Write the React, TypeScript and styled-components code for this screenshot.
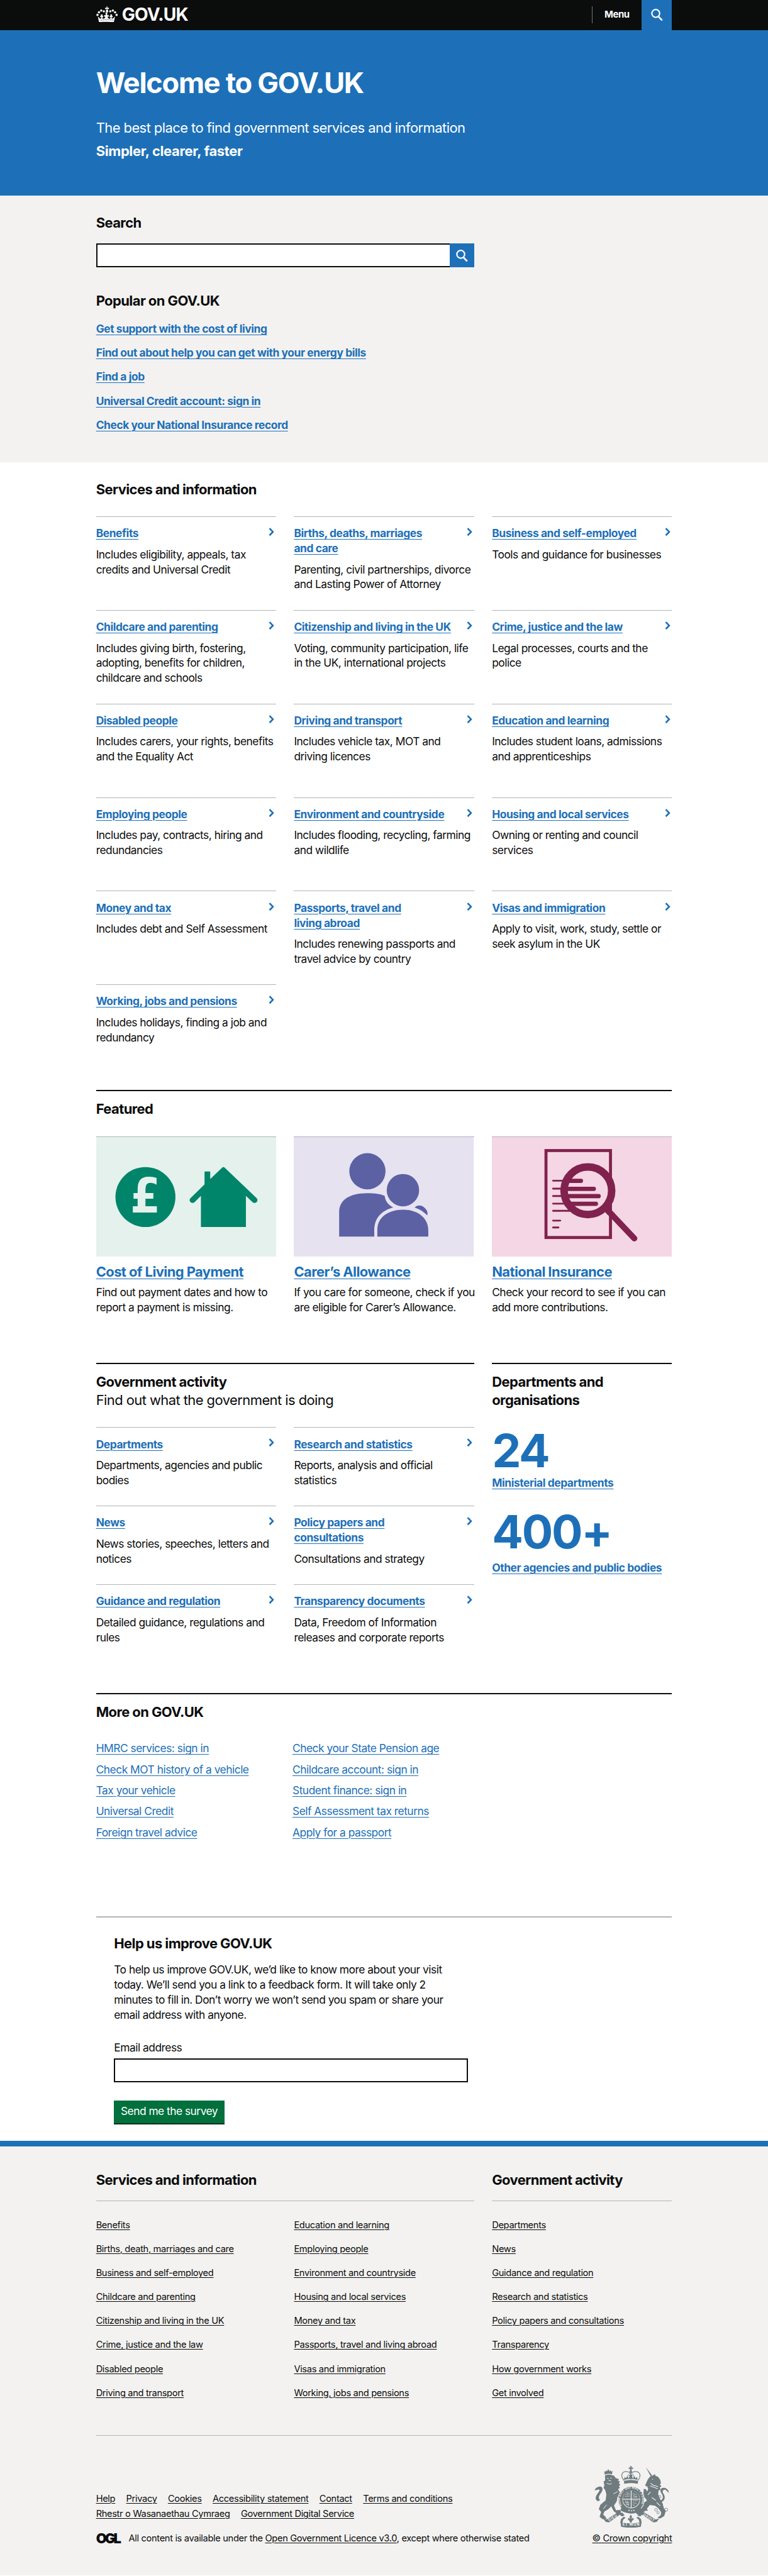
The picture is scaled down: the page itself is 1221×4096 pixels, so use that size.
import React from 'react';
import styled, { createGlobalStyle } from 'styled-components';

const blue = '#1d70b8';
const ink = '#0b0c0c';
const paleGrey = '#f3f2f1';
const midGrey = '#b1b4b6';

/* 1rem is ten design pixels, so every measure below scales with the root size. */
const GlobalStyle = createGlobalStyle`
  html { font-size: 9.539px; }
  *, *::before, *::after { box-sizing: border-box; }
  body {
    margin: 0;
    background: #fff;
    color: ${ink};
    font-family: Inter, Roboto, 'Liberation Sans', sans-serif;
    font-size: 1.824rem;
    line-height: 2.5rem;
    letter-spacing: -0.0285em;
  }
  h1, h2, h3, p, ul { margin: 0; padding: 0; font-weight: 400; }
  h3 { font-size: inherit; }
  ul { list-style: none; }
  svg { display: block; }
`;

/* ---------- shared parts ---------- */

const Container = styled.div`
  width: 96rem;
  margin: 0 auto;
`;

const Heading = styled.h2`
  font-size: 2.304rem;
  line-height: 3rem;
  font-weight: 700;
  letter-spacing: -0.0265em;
`;

const Lead = styled.p`
  font-size: 2.304rem;
  line-height: 3rem;
  letter-spacing: -0.026em;
`;

const Link = styled.a<{ $bold?: boolean; $dark?: boolean; $large?: boolean }>`
  color: ${p => (p.$dark ? ink : blue)};
  font-weight: ${p => (p.$bold ? 700 : 400)};
  font-size: ${p => (p.$large ? '2.304rem' : 'inherit')};
  letter-spacing: ${p => (p.$bold ? (p.$large ? '-0.027em' : '-0.024em') : 'inherit')};
  text-decoration: underline;
  text-decoration-thickness: 1px;
  text-underline-offset: ${p => (p.$dark ? '0.26rem' : '0.31rem')};
`;

const ThreeColumns = styled.div`
  display: grid;
  grid-template-columns: repeat(3, 30rem);
  column-gap: 3rem;
`;

const SearchGlyph = () => (
  <SearchSvg viewBox="0 0 20 20" fill="none" stroke="#fff">
    <circle cx="7.9" cy="7.7" r="6.5" strokeWidth="2.3" />
    <path d="M12.3 12.8 18.6 19.4" strokeWidth="2.8" />
  </SearchSvg>
);
const SearchSvg = styled.svg`
  width: 2rem;
  height: 2rem;
`;

/* ---------- header ---------- */

const Header = styled.header`
  background: ${ink};
`;
const HeaderRow = styled(Container)`
  display: flex;
  height: 5rem;
`;
const Logo = styled.div`
  display: flex;
  align-items: flex-start;
  gap: 0.7rem;
  padding-top: 1rem;
  color: #fff;
`;
const CrownSvg = styled.svg`
  width: 3.6rem;
  height: 2.7rem;
`;
const LogoText = styled.span`
  font-size: 2.95rem;
  line-height: 3rem;
  font-weight: 700;
  letter-spacing: -0.028em;
  margin-top: -0.05rem;
`;
const Menu = styled.div`
  display: flex;
  align-items: center;
  margin: 1rem 0 1.1rem auto;
  padding: 0 2rem;
  border-left: 1px solid #6f777b;
  color: #fff;
  font-size: 1.57rem;
  font-weight: 700;
  letter-spacing: -0.03em;
`;
const HeaderSearch = styled.button`
  width: 5.1rem;
  padding: 0;
  border: 0;
  background: ${blue};
  display: flex;
  align-items: center;
  justify-content: center;
`;

const Crown = () => (
  <CrownSvg viewBox="0 0 36 27" fill="#fff">
    <path d="M17 .6h2l-.4 2.3 2.6-.6v2.6l-2.6-.6.3 2a2 2 0 1 1-1.8 0l.3-2-2.6.6V2.300l2.600.6z" />
    <circle cx="2.1" cy="14.300" r="1.900" />
    <circle cx="4.600" cy="9.900" r="1.900" />
    <circle cx="8.300" cy="7.100" r="1.900" />
    <circle cx="12.600" cy="8.300" r="1.800" />
    <circle cx="33.900" cy="14.300" r="1.900" />
    <circle cx="31.400" cy="9.900" r="1.900" />
    <circle cx="27.700" cy="7.100" r="1.900" />
    <circle cx="23.400" cy="8.300" r="1.800" />
    <path d="M4.700 26.800 2.700 17.200c2 1 3 3.800 4.700 3.300 1.400-.4 1.200-2 .7-2.600l-1.500.6v-2.800l1.500.6-.6-2.600h3.200l-.6 2.600 1.500-.6v2.800l-1.500-.6c-.3 1.600.6 3 2.400 2.700 1.900-.3 2.600-1.800 2.500-3.500l-1.600.8-.3-3.600 2 1 .9-2.200-1-2.500h4l-1 2.500.9 2.200 2-1-.3 3.600-1.600-.8c-.1 1.700.6 3.200 2.500 3.500 1.800.3 2.700-1.100 2.400-2.700l-1.500.6v-2.800l1.500.6-.6-2.600h3.200l-.6 2.600 1.500-.6v2.800l-1.500-.6c-.5.6-.7 2.200.7 2.600 1.700.5 2.700-2.300 4.700-3.300l-2 9.600c-8.400-1.200-18.200-1.200-26.600 0z" />
    <path d="M7.500 23.300c7-1 14-1 21 0" fill="none" stroke={ink} strokeWidth=".8" strokeDasharray="2 1.200" />
  </CrownSvg>
);

/* ---------- hero ---------- */

const Hero = styled.section`
  height: 27.6rem;
  padding-top: 6.3rem;
  background: ${blue};
  color: #fff;
`;
const Title = styled.h1`
  font-size: 4.72rem;
  line-height: 5rem;
  font-weight: 700;
  letter-spacing: -0.028em;
  margin-bottom: 3.5rem;
`;
const Strapline = styled(Heading).attrs({ as: 'p' })`
  margin-top: 0.9rem;
  letter-spacing: -0.017em;
`;

/* ---------- search and popular ---------- */

const SearchSection = styled.section`
  padding: 3rem 0 5rem;
  background: ${paleGrey};
`;
const SearchBox = styled.div`
  display: flex;
  width: 63rem;
  height: 4rem;
  margin: 2rem 0 4rem;
`;
const SearchInput = styled.input`
  flex: 1;
  border: 2px solid ${ink};
  border-right: 0;
  border-radius: 0;
  background: #fff;
`;
const SearchButton = styled.button`
  width: 4rem;
  padding: 0;
  border: 0;
  background: ${blue};
  display: flex;
  align-items: center;
  justify-content: center;
`;
const PopularList = styled.ul`
  display: grid;
  row-gap: 1.5rem;
  margin-top: 2rem;
`;

/* ---------- topic grids ---------- */

const TopicGrid = styled.div<{ $columns: number }>`
  display: grid;
  grid-template-columns: repeat(${p => p.$columns}, 30rem);
  grid-auto-rows: 1fr;
  column-gap: 3rem;
  margin-top: 3rem;
`;
const TopicCell = styled.div`
  border-top: 1px solid ${midGrey};
  padding: 1.5rem 0 3rem;
`;
const TopicHead = styled.div`
  display: flex;
  justify-content: space-between;
  margin-bottom: 1rem;
  white-space: nowrap;
`;
const Chevron = styled.svg`
  flex: none;
  width: 1rem;
  height: 1.4rem;
  margin: 0.3rem 0.2rem 0 0;
`;
const Text = styled.p`
  white-space: nowrap;
`;

type TopicData = { title: string[]; text: string[] };

const Lines = ({ of }: { of: string[] }) => (
  <>
    {of.map((line, i) => (
      <React.Fragment key={line}>
        {i > 0 && <br />}
        {line}
      </React.Fragment>
    ))}
  </>
);

const Topic = ({ title, text }: TopicData) => (
  <TopicCell>
    <TopicHead>
      <h3>
        <Link $bold><Lines of={title} /></Link>
      </h3>
      <Chevron viewBox="0 0 10 14" fill="none" stroke={blue} strokeWidth="2.8">
        <path d="M1.6 1.2 7.2 7l-5.600 5.800" />
      </Chevron>
    </TopicHead>
    <Text><Lines of={text} /></Text>
  </TopicCell>
);

const services: TopicData[] = [
  { title: ['Benefits'], text: ['Includes eligibility, appeals, tax', 'credits and Universal Credit'] },
  { title: ['Births, deaths, marriages', 'and care'], text: ['Parenting, civil partnerships, divorce', 'and Lasting Power of Attorney'] },
  { title: ['Business and self-employed'], text: ['Tools and guidance for businesses'] },
  { title: ['Childcare and parenting'], text: ['Includes giving birth, fostering,', 'adopting, benefits for children,', 'childcare and schools'] },
  { title: ['Citizenship and living in the UK'], text: ['Voting, community participation, life', 'in the UK, international projects'] },
  { title: ['Crime, justice and the law'], text: ['Legal processes, courts and the', 'police'] },
  { title: ['Disabled people'], text: ['Includes carers, your rights, benefits', 'and the Equality Act'] },
  { title: ['Driving and transport'], text: ['Includes vehicle tax, MOT and', 'driving licences'] },
  { title: ['Education and learning'], text: ['Includes student loans, admissions', 'and apprenticeships'] },
  { title: ['Employing people'], text: ['Includes pay, contracts, hiring and', 'redundancies'] },
  { title: ['Environment and countryside'], text: ['Includes flooding, recycling, farming', 'and wildlife'] },
  { title: ['Housing and local services'], text: ['Owning or renting and council', 'services'] },
  { title: ['Money and tax'], text: ['Includes debt and Self Assessment'] },
  { title: ['Passports, travel and', 'living abroad'], text: ['Includes renewing passports and', 'travel advice by country'] },
  { title: ['Visas and immigration'], text: ['Apply to visit, work, study, settle or', 'seek asylum in the UK'] },
  { title: ['Working, jobs and pensions'], text: ['Includes holidays, finding a job and', 'redundancy'] },
];

const activity: TopicData[] = [
  { title: ['Departments'], text: ['Departments, agencies and public', 'bodies'] },
  { title: ['Research and statistics'], text: ['Reports, analysis and official', 'statistics'] },
  { title: ['News'], text: ['News stories, speeches, letters and', 'notices'] },
  { title: ['Policy papers and', 'consultations'], text: ['Consultations and strategy'] },
  { title: ['Guidance and regulation'], text: ['Detailed guidance, regulations and', 'rules'] },
  { title: ['Transparency documents'], text: ['Data, Freedom of Information', 'releases and corporate reports'] },
];

const ServicesSection = styled(Container)`
  padding-top: 3rem;
`;

/* ---------- ruled sections ---------- */

const RuledSection = styled.section<{ $gap: string }>`
  margin-top: ${p => p.$gap};
  border-top: 2px solid ${ink};
  padding-top: 1.5rem;
`;

/* ---------- featured ---------- */

const FeatureRow = styled(ThreeColumns)`
  margin-top: 3rem;
`;
const Picture = styled.svg`
  width: 30rem;
  height: 20.1rem;
  border-top: 1px solid ${midGrey};
  margin-bottom: 1rem;
`;
const FeatureTitle = styled(Heading).attrs({ as: 'h3' })`
  margin-bottom: 0.7rem;
`;

const MoneyAndHome = () => (
  <Picture viewBox="0 0 300 200">
    <rect width="300" height="200" fill="#e5f1ed" />
    <circle cx="82" cy="100" r="50" fill="#00856a" />
    <text x="81.500" y="126" textAnchor="middle" fontFamily="'DejaVu Sans', sans-serif" fontWeight="700" fontSize="80" textLength="50" lengthAdjust="spacingAndGlyphs" fill="#e5f1ed">£</text>
    <path fill="#00856a" d="M209.500 51.500c1.500-1.800 3.500-1.800 5 0l53 50.500c4 4.500-2 10.500-7 6.500L249.500 98v52h-75V98L164 108.500c-5 4-11-2-7-6.500l23.500-23V57.500h9.500V70z" />
  </Picture>
);

const TwoPeople = () => (
  <Picture viewBox="0 0 300 200">
    <rect width="300" height="200" fill="#e6e2f0" />
    <g fill="#5c61a4">
      <circle cx="122.800" cy="57" r="30.200" />
      <circle cx="182" cy="88.500" r="27" />
      <path d="M75.700 166v-41c0-20 17-31.300 47-31.300 12 0 22 1.300 29 4.600.5 8 6 15 14 19-20 6-31.500 18-31.500 38.700v10z" />
      <path d="M139.300 166v-12c0-20 18-33 43-33s42 14 42 35v10z" />
      <path d="M201.500 117.500c5-4.500 11-4.500 16 0 5 4 6.500 9 5 13-5.500-5.500-12-10-21-13z" />
    </g>
  </Picture>
);

const DocumentLens = () => (
  <Picture viewBox="0 0 300 200">
    <rect width="300" height="200" fill="#f5d6e4" />
    <g stroke="#80224d" fill="none">
      <rect x="90.200" y="22.500" width="107.500" height="145" strokeWidth="5" />
      <path strokeWidth="3" strokeLinecap="round" d="M102 72.700h24M102 86h18M102 98.300h18M102 111h20M102 123h28M102 139.300h12M102 150.700h9" />
      <circle cx="160" cy="89.500" r="39.700" strokeWidth="12.500" fill="#f5d6e4" />
      <path strokeWidth="7" strokeLinecap="round" d="M124 73h24.500M119 86.300h51M120 98.500h58M124 111.200h49.500" />
      <path strokeWidth="10" strokeLinecap="round" d="M192 121 237.500 169" />
      <path strokeWidth="8" d="M186 116 196 127" />
    </g>
  </Picture>
);

/* ---------- government activity ---------- */

const ActivityRow = styled.div`
  display: grid;
  grid-template-columns: 63rem 30rem;
  column-gap: 3rem;
`;
const BigNumber = styled.p<{ $top: string; $bottom?: string }>`
  margin: ${p => p.$top} 0 ${p => p.$bottom || '0'};
  color: ${blue};
  font-size: 7.7rem;
  line-height: 8rem;
  font-weight: 700;
  letter-spacing: -0.03em;
`;

/* ---------- more ---------- */

const MoreLists = styled.div`
  display: grid;
  grid-template-columns: 32.75rem auto;
  margin-top: 3.3rem;
`;
const MoreList = styled.ul`
  display: grid;
  row-gap: 1rem;
  justify-items: start;
`;

/* ---------- survey ---------- */

const Survey = styled.section`
  margin-top: 12.7rem;
  border-top: 2px solid ${midGrey};
  padding: 2.9rem 3rem 2.8rem;
`;
const SurveyText = styled(Text)`
  margin: 1.6rem 0 3rem;
`;
const EmailLabel = styled.label`
  display: block;
`;
const EmailInput = styled.input`
  display: block;
  width: 59rem;
  height: 4rem;
  margin: 0.5rem 0 3rem;
  border: 2px solid ${ink};
  border-radius: 0;
  background: #fff;
`;
const SurveyButton = styled.button`
  display: block;
  height: 4rem;
  width: 18.4rem;
  padding: 0;
  border: 0;
  border-bottom: 2px solid #002d18;
  background: #00703c;
  color: #fff;
  font: inherit;
  line-height: 3.6rem;
  letter-spacing: -0.03em;
`;

/* ---------- footer ---------- */

const Footer = styled.footer`
  border-top: 1rem solid ${blue};
  padding: 4rem 0 5.2rem;
  background: ${paleGrey};
  font-size: 1.536rem;
  line-height: 2rem;
  letter-spacing: -0.023em;
`;
const FooterNav = styled.div`
  display: grid;
  grid-template-columns: 63rem 30rem;
  column-gap: 3rem;
`;
const FooterHeading = styled(Heading)`
  padding-bottom: 2rem;
  border-bottom: 1px solid ${midGrey};
  margin-bottom: 3rem;
`;
const FooterList = styled.ul<{ $columns: number }>`
  display: grid;
  grid-template-columns: repeat(${p => p.$columns}, 30rem);
  grid-template-rows: repeat(8, 2rem);
  grid-auto-flow: column;
  gap: 2rem 3rem;
`;
const Meta = styled.div`
  display: flex;
  justify-content: space-between;
  align-items: flex-end;
  margin-top: 6rem;
  padding-top: 5rem;
  border-top: 1px solid ${midGrey};
`;
const MetaLinks = styled.ul`
  display: flex;
  flex-wrap: wrap;
  width: 62rem;
  column-gap: 1.82rem;
  line-height: 2.5rem;
  margin-bottom: 1.75rem;
`;
const Licence = styled.div`
  display: flex;
  align-items: center;
`;
const Ogl = styled.span`
  width: 5.45rem;
  font-size: 2.3rem;
  line-height: 2rem;
  font-weight: 900;
  letter-spacing: -0.13em;
`;
const Copyright = styled.div`
  display: flex;
  flex-direction: column;
  align-items: flex-end;
`;
const ArmsSvg = styled.svg`
  width: 12.5rem;
  height: 10.3rem;
  margin: 0 0.4rem 0.8rem 0;
`;

const grey = '#6f7b7f';
const Arms = () => (
  <ArmsSvg viewBox="33 32 375 309">
    <defs>
      <path id="garter" d="M173 233A55 55 0 1 1 261 233" />
    </defs>
    {/* crown */}
    <g fill={grey}>
      <path d="M211 33h9l-2 8 8-2v9l-8-2 2 9h-9l2-9-8 2v-9l8 2z" />
      <circle cx="215" cy="60" r="6" />
      <path d="M180 107q35-10 72 0l-3 15q-33-8-66 0z" />
      <path d="M181 102l3-16 7 8 6-12 7 14 5-12-4-4 10-8 10 8-4 4 5 12 7-14 6 12 7-8 3 16q-34-9-68 0z" />
    </g>
    <g fill="none" stroke={grey} strokeWidth="4.500" strokeDasharray="5 1">
      <path d="M181 104c-30-36 8-58 34-34 26-24 64-2 36 34" />
      <path d="M215 66c-14 6-17 18-15 30M215 66c14 6 17 18 15 30M215 66v34" strokeWidth="3" />
    </g>
    {/* lion */}
    <g fill={grey}>
      <path d="M85 76l-3-18 7 4 2-8 6 5 5-12 6 12 7-6 1 8 8-5-3 18q-17-6-36 2z" />
      <path d="M86 80q18-8 36-2c10 2 14 6 16 14l18 6-5 7 10 6-6 7 8 8-7 6 4 10-9 6 14 22 12 14-8 8 8 22-13-8-15-22-4 24-14 22 10 24 18-2 8 8-6 8h-18l-12-8-14-26-14 14-20 12-6 16 10 8 8 14h-22l-14-12 8-24-12-14 8-22 26-22 4-30-6-22-8-10 4-14-4-18 8-6z" />
      <path d="M52 209c-24-8-8-34 2-46 8-10 4-16-4-12l-16 4 6-12 14-7c18-6 26 10 14 28-10 14-20 28-6 38z" />
    </g>
    <g fill="none" stroke={paleGrey} strokeWidth="3">
      <path d="M96 92l8 5M112 94l8-2M104 104l12 3M78 246l16-20M128 172l22-12M154 196l10 12M94 118q14 10 26 2" />
    </g>
    {/* unicorn */}
    <g fill={grey}>
      <path d="M290 38l32 42-7 5z" />
      <path d="M300 100l10-14 16-7 10-6 2 8 14 6 10 14 4 18-6 4 8 12-8 4 4 12-10 4-2 18 8 22 14 24 6 24 10 14-8 26-20 12-14-4 16-12 4-14-16-22-16-12-26-4-14 18 4 12-10-2-20 14-22 6-8-8 14-6 24-30-2-12 20-14-10-14-24 4-14-20-8-2 2-12 16-6 10 6-10 8 8 14 20-4 8-16 8-14-4-16-12-2z" />
      <path d="M366 214c20-8 24-28 12-44-10-14 4-26 16-14l12 12-4-14-8-8c-20-12-38 2-28 20 10 16 16 28-2 40z" />
      <path d="M280 146l12 4 8 20-6 16-12-2-4-12z" />
    </g>
    <g fill="none" stroke={paleGrey} strokeWidth="3.500">
      <path d="M314 118l12 10 26 8M312 132l38 14M322 98l4 2M320 190l20 14M344 214l18 18M300 176l14-14" />
    </g>
    <g fill="none" stroke={grey} strokeWidth="2.500">
      <circle cx="341" cy="251" r="7" />
      <circle cx="351" cy="266" r="6" />
      <circle cx="374" cy="262" r="7" />
      <circle cx="392" cy="251" r="8" />
      <circle cx="360" cy="186" r="6" />
      <circle cx="299" cy="132" r="5" />
    </g>
    {/* garter and shield */}
    <circle cx="217" cy="200" r="67" fill={paleGrey} />
    <circle cx="217" cy="200" r="54" fill="none" stroke={grey} strokeWidth="20" />
    <text fontSize="15" fontWeight="700" fill={paleGrey} letterSpacing="0">
      <textPath href="#garter" startOffset="4" textLength="226">HONI SOIT QUI MAL Y PENSE</textPath>
    </text>
    <circle cx="217" cy="198" r="42" fill={grey} />
    <path d="M217 156v84M175 198h84" stroke={paleGrey} strokeWidth="4" />
    <g fill="none" stroke={paleGrey} strokeWidth="2.500">
      <path d="M188 176h22M186 184h24M194 168h16M224 170l20 6M226 180l22 6M226 188h20M226 206h22M226 216l18 4M226 226l10 4M188 206l14 24M196 204l10 26M186 214h20M190 224h16" strokeDasharray="6 2" />
    </g>
    <path d="M170 238q44 34 92-2l8 18q-52 32-108 0z" fill={grey} />
    <path d="M203 254h6M215 256h6M227 254h6" stroke={paleGrey} strokeWidth="5" />
    {/* scrolls */}
    <g fill={grey}>
      <path d="M76 294l18 6 56-36 24 2 10 14-14 4-10-8-54 38-16-2z" />
      <path d="M358 294l-18 6-58-36-24 2-10 14 14 4 10-8 56 38 16-2z" />
      <path d="M163 312q52 14 106 0l-4 24q-48 10-98 0z" />
      <path d="M180 286l-14 12-3 16 10 3 4-16 12-10zM252 286l14 12 3 16-10 3-4-16-12-10z" />
      <path d="M215 275l6 11-3 12 8-7 4 8-9 8-3 10h-6l-3-10-9-8 4-8 8 7-3-12z" />
    </g>
    <g fill={paleGrey} fontSize="17" fontWeight="700" letterSpacing="0">
      <text transform="translate(106 309) rotate(-31)" textLength="48">DIEU</text>
      <text transform="translate(276 279) rotate(31)" textLength="62">DROIT</text>
      <text x="174" y="332" fontSize="18" textLength="84">ET MON</text>
    </g>
  </ArmsSvg>
);

const popular = [
  'Get support with the cost of living',
  'Find out about help you can get with your energy bills',
  'Find a job',
  'Universal Credit account: sign in',
  'Check your National Insurance record',
];
const moreLeft = ['HMRC services: sign in', 'Check MOT history of a vehicle', 'Tax your vehicle', 'Universal Credit', 'Foreign travel advice'];
const moreRight = ['Check your State Pension age', 'Childcare account: sign in', 'Student finance: sign in', 'Self Assessment tax returns', 'Apply for a passport'];
const footerServices = [
  'Benefits', 'Births, death, marriages and care', 'Business and self-employed', 'Childcare and parenting',
  'Citizenship and living in the UK', 'Crime, justice and the law', 'Disabled people', 'Driving and transport',
  'Education and learning', 'Employing people', 'Environment and countryside', 'Housing and local services',
  'Money and tax', 'Passports, travel and living abroad', 'Visas and immigration', 'Working, jobs and pensions',
];
const footerActivity = [
  'Departments', 'News', 'Guidance and regulation', 'Research and statistics',
  'Policy papers and consultations', 'Transparency', 'How government works', 'Get involved',
];
const metaLinks = [
  'Help', 'Privacy', 'Cookies', 'Accessibility statement', 'Contact', 'Terms and conditions',
  'Rhestr o Wasanaethau Cymraeg', 'Government Digital Service',
];

const Links = ({ items, bold, dark }: { items: string[]; bold?: boolean; dark?: boolean }) => (
  <>
    {items.map(item => (
      <li key={item}>
        <Link $bold={bold} $dark={dark}>{item}</Link>
      </li>
    ))}
  </>
);

export default function App() {
  return (
    <>
      <GlobalStyle />
      <Header>
        <HeaderRow>
          <Logo>
            <Crown />
            <LogoText>GOV.UK</LogoText>
          </Logo>
          <Menu>Menu</Menu>
          <HeaderSearch aria-label="Search GOV.UK"><SearchGlyph /></HeaderSearch>
        </HeaderRow>
      </Header>

      <Hero>
        <Container>
          <Title>Welcome to GOV.UK</Title>
          <Lead>The best place to find government services and information</Lead>
          <Strapline>Simpler, clearer, faster</Strapline>
        </Container>
      </Hero>

      <SearchSection>
        <Container>
          <Heading>Search</Heading>
          <SearchBox>
            <SearchInput aria-label="Search" />
            <SearchButton aria-label="Search"><SearchGlyph /></SearchButton>
          </SearchBox>
          <Heading>Popular on GOV.UK</Heading>
          <PopularList><Links items={popular} bold /></PopularList>
        </Container>
      </SearchSection>

      <ServicesSection>
        <Heading>Services and information</Heading>
        <TopicGrid $columns={3}>
          {services.map(topic => <Topic key={topic.title[0]} {...topic} />)}
        </TopicGrid>
      </ServicesSection>

      <Container>
        <RuledSection $gap="2rem">
          <Heading>Featured</Heading>
          <FeatureRow>
            <div>
              <MoneyAndHome />
              <FeatureTitle><Link $bold $large>Cost of Living Payment</Link></FeatureTitle>
              <Text><Lines of={['Find out payment dates and how to', 'report a payment is missing.']} /></Text>
            </div>
            <div>
              <TwoPeople />
              <FeatureTitle><Link $bold $large>Carer’s Allowance</Link></FeatureTitle>
              <Text><Lines of={['If you care for someone, check if you', 'are eligible for Carer’s Allowance.']} /></Text>
            </div>
            <div>
              <DocumentLens />
              <FeatureTitle><Link $bold $large>National Insurance</Link></FeatureTitle>
              <Text><Lines of={['Check your record to see if you can', 'add more contributions.']} /></Text>
            </div>
          </FeatureRow>
        </RuledSection>

        <ActivityRow>
          <RuledSection $gap="8rem">
            <Heading>Government activity</Heading>
            <Lead>Find out what the government is doing</Lead>
            <TopicGrid $columns={2}>
              {activity.map(topic => <Topic key={topic.title[0]} {...topic} />)}
            </TopicGrid>
          </RuledSection>
          <RuledSection $gap="8rem">
            <Heading>Departments and<br />organisations</Heading>
            <BigNumber $top="3rem">24</BigNumber>
            <Link $bold>Ministerial departments</Link>
            <BigNumber $top="3rem" $bottom="0.7rem">400+</BigNumber>
            <Link $bold>Other agencies and public bodies</Link>
          </RuledSection>
        </ActivityRow>

        <RuledSection $gap="5rem">
          <Heading>More on GOV.UK</Heading>
          <MoreLists>
            <MoreList><Links items={moreLeft} /></MoreList>
            <MoreList><Links items={moreRight} /></MoreList>
          </MoreLists>
        </RuledSection>

        <Survey>
          <Heading>Help us improve GOV.UK</Heading>
          <SurveyText>
            <Lines
              of={[
                'To help us improve GOV.UK, we’d like to know more about your visit',
                'today. We’ll send you a link to a feedback form. It will take only 2',
                'minutes to fill in. Don’t worry we won’t send you spam or share your',
                'email address with anyone.',
              ]}
            />
          </SurveyText>
          <EmailLabel htmlFor="email">Email address</EmailLabel>
          <EmailInput id="email" />
          <SurveyButton>Send me the survey</SurveyButton>
        </Survey>
      </Container>

      <Footer>
        <Container>
          <FooterNav>
            <div>
              <FooterHeading>Services and information</FooterHeading>
              <FooterList $columns={2}><Links items={footerServices} dark /></FooterList>
            </div>
            <div>
              <FooterHeading>Government activity</FooterHeading>
              <FooterList $columns={1}><Links items={footerActivity} dark /></FooterList>
            </div>
          </FooterNav>
          <Meta>
            <div>
              <MetaLinks><Links items={metaLinks} dark /></MetaLinks>
              <Licence>
                <Ogl>OGL</Ogl>
                <span>
                  All content is available under the <Link $dark>Open Government Licence v3.0</Link>, except where otherwise stated
                </span>
              </Licence>
            </div>
            <Copyright>
              <Arms />
              <Link $dark>© Crown copyright</Link>
            </Copyright>
          </Meta>
        </Container>
      </Footer>
    </>
  );
}
